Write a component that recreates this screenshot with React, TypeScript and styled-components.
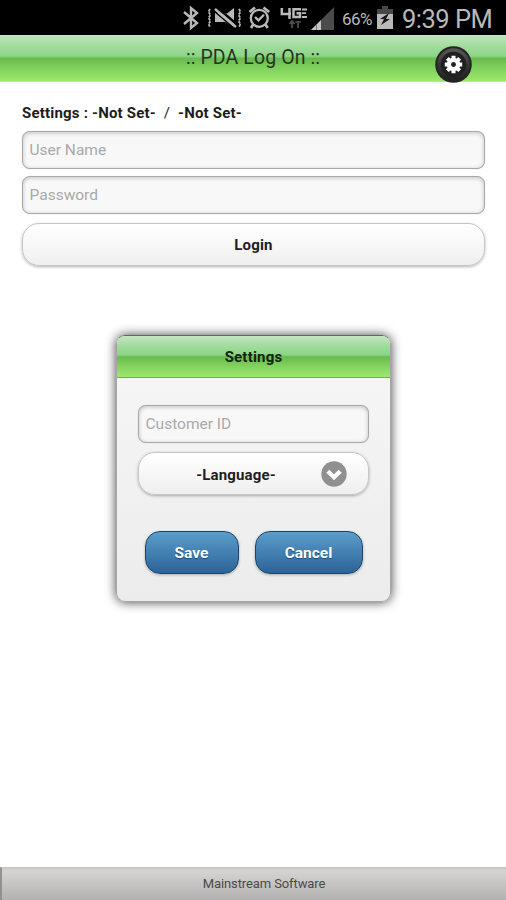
import React from "react";
import styled, { createGlobalStyle, css } from "styled-components";

const GlobalStyle = createGlobalStyle`
  *, *::before, *::after { box-sizing: border-box; }
  html, body { margin: 0; padding: 0; background: #fff; overflow: hidden; }
  body, input, button { font-family: Roboto, "Liberation Sans", sans-serif; }
`;

const greenGloss = css`
  background: linear-gradient(
    to bottom,
    #c3e6bf 0%,
    #a5dca0 22%,
    #8bd487 46%,
    #69bb4d 51%,
    #83d25f 74%,
    #9de86c 100%
  );
`;

const Screen = styled.div`
  position: relative;
  width: 506px;
  height: 900px;
  display: flex;
  flex-direction: column;
  background: #fff;
  overflow: hidden;
`;

const StatusBar = styled.header`
  height: 35px;
  flex: none;
  display: flex;
  align-items: flex-start;
  padding-left: 182px;
  background: #000;
  color: #b9b9b9;
`;

const StatusIcon = styled.svg<{ $gap: number }>`
  display: block;
  flex: none;
  margin-right: ${(p) => p.$gap}px;
`;

const BatteryLevel = styled.span`
  width: 35px;
  padding-top: 9px;
  font-size: 17px;
  line-height: 20px;
  letter-spacing: -0.5px;
  white-space: nowrap;
`;

const Clock = styled.time`
  padding-top: 4px;
  font-size: 25.5px;
  line-height: 30px;
  letter-spacing: -0.5px;
  white-space: nowrap;
`;

const TitleBar = styled.div`
  height: 47px;
  flex: none;
  display: grid;
  grid-template-columns: 72px 1fr 72px;
  border-bottom: 1px solid #b7eb9b;
  ${greenGloss}
`;

const Title = styled.h1`
  grid-column: 2;
  margin: 0;
  padding-top: 9px;
  text-align: center;
  font-size: 19.5px;
  font-weight: 400;
  line-height: 27px;
  letter-spacing: 0.1px;
  color: #263522;
`;

const GearButton = styled.button`
  width: 37px;
  height: 37px;
  margin: 11px 0 0 1px;
  padding: 0;
  border: 0;
  background: none;
  svg { display: block; }
`;

const Form = styled.main`
  flex: 1;
  display: flex;
  flex-direction: column;
  padding: 21px 21px 0 22px;
`;

const SettingsLine = styled.p`
  margin: 0 0 8px;
  font-size: 15px;
  font-weight: 700;
  line-height: 20px;
  letter-spacing: 0.2px;
  color: #1c1c1c;
  white-space: pre;
`;

const Separator = styled.span`
  font-weight: 400;
`;

const Field = styled.input<{ $gap: number }>`
  width: 100%;
  height: 38px;
  flex: none;
  margin: 0 0 ${(p) => p.$gap}px;
  padding: 0 6.5px;
  border: 1px solid #a9a9a9;
  border-radius: 8px;
  background: #f8f8f8;
  box-shadow: inset 0 1px 4px rgba(0, 0, 0, 0.22), 0 0 1px rgba(0, 0, 0, 0.25);
  font-size: 15.5px;
  letter-spacing: 0;
  outline: none;
  &::placeholder { color: #a9a9a9; opacity: 1; }
`;

const PillButton = styled.button`
  position: relative;
  width: 100%;
  height: 43px;
  flex: none;
  display: flex;
  align-items: center;
  justify-content: center;
  padding: 1px 0 0 0;
  border: 1px solid #c6c6c6;
  border-radius: 17px;
  background: linear-gradient(to bottom, #fff, #efefef);
  box-shadow: 0 1px 3px rgba(0, 0, 0, 0.3);
  font-size: 15px;
  font-weight: 700;
  letter-spacing: 0.15px;
  color: #1e1e1e;
`;

const SelectButton = styled(PillButton)`
  padding: 2px 35px 0 0;
`;

const SelectArrow = styled.svg`
  position: absolute;
  right: 21px;
  top: 8px;
`;

const Dialog = styled.section`
  position: absolute;
  left: 116px;
  top: 335px;
  width: 275px;
  height: 267px;
  display: flex;
  flex-direction: column;
  border: 1px solid #a5a5a5;
  border-top-color: #5b6d59;
  border-radius: 9px;
  background: linear-gradient(to bottom, #f7f7f7, #ececec);
  box-shadow: 0 0 11px rgba(0, 0, 0, 0.75);
  overflow: hidden;
`;

const DialogTitle = styled.h2`
  height: 42px;
  flex: none;
  margin: 0;
  border-bottom: 1px solid #79a75f;
  text-align: center;
  font-size: 15px;
  line-height: 42px;
  font-weight: 700;
  letter-spacing: 0.2px;
  color: #15240f;
  ${greenGloss}
`;

const DialogBody = styled.div`
  padding: 27px 21px 0;
`;

const Actions = styled.div`
  display: flex;
  gap: 16px;
  padding: 36px 0 0 7px;
`;

const BlueButton = styled.button<{ $width: number }>`
  width: ${(p) => p.$width}px;
  height: 43px;
  padding: 1px 1px 0 0;
  border: 1px solid #1c4566;
  border-radius: 15px;
  background: linear-gradient(to bottom, #5b9dcb, #2c6398);
  box-shadow: 0 1px 3px rgba(0, 0, 0, 0.28);
  color: #fff;
  font-size: 15.5px;
  font-weight: 700;
  text-shadow: 0 1px 1px #194b7e;
`;

const Footer = styled.footer`
  height: 33px;
  flex: none;
  padding-left: 20px;
  border-top: 1px solid #c2c1c0;
  border-left: 2px solid #929191;
  background: linear-gradient(to bottom, #d9d7d5, #b2b1b1);
  box-shadow: inset 0 2px 0 #cecdcb;
  text-align: center;
  font-size: 13px;
  line-height: 31px;
  letter-spacing: -0.1px;
  color: #4a4a4a;
`;

const Bluetooth = () => (
  <StatusIcon $gap={8} width="18" height="35" viewBox="0 0 18 35" fill="none" stroke="currentColor" strokeWidth="2.4">
    <path d="M2 12 L15 23 L9 28 V8 L15 13 L2 24" />
  </StatusIcon>
);

const VibrateMuted = () => (
  <StatusIcon $gap={6} width="34" height="35" viewBox="0 0 34 35" fill="none" stroke="currentColor">
    <path d="M2 9 l-1.5 3 2 3 -2 3 2 3 -2 3 1.5 3 M31 9 l1.5 3 -2 3 2 3 -2 3 2 3 -1.5 3" strokeWidth="1.8" strokeDasharray="2.8 0.8" />
    <path d="M7 13 H13 L19 13.5 L26 8 V27 L17 22 H7 Z" fill="currentColor" stroke="none" />
    <path d="M8.5 7 L29.5 25" stroke="#000" strokeWidth="2.6" />
    <path d="M6 11 L27 29" stroke="#000" strokeWidth="1.6" />
    <path d="M7 9 L28 27" strokeWidth="2.4" />
  </StatusIcon>
);

const Alarm = () => (
  <StatusIcon $gap={9} width="23" height="35" viewBox="0 0 23 35" fill="none" stroke="currentColor" strokeWidth="2.3">
    <circle cx="11.3" cy="18.3" r="8.5" />
    <path d="M1.5 12 L7 7.5 M15.5 7.5 L21.2 12 M5.2 24.5 L3 28 M17.5 24.5 L19.7 28" strokeWidth="2.7" />
    <path d="M7 17 L10.5 20.4 L16 14.8" />
  </StatusIcon>
);

const Network4G = () => (
  <StatusIcon $gap={3} width="28" height="35" viewBox="0 0 28 35" fill="none" stroke="currentColor" strokeWidth="2.5">
    <path d="M1.8 8 V14 H11 M9.5 8 V19 M21 9.2 H13.5 V17 H20 V13.2 H16.5" />
    <path d="M22 9.5 H27 M22 13.2 H26 M22 17 H27" strokeWidth="1.8" />
    <path d="M12 21 V28 M9.5 24 L12 21 L14.5 24 M18 21 V28 M15.5 22 H21" stroke="#505050" strokeWidth="1.7" />
  </StatusIcon>
);

const Signal = () => (
  <StatusIcon $gap={8} width="23" height="35" viewBox="0 0 23 35">
    <path d="M0 30 L23 7 V30 Z" fill="#4b4b4b" />
    <path d="M0 30 L10 20 V30 Z" fill="#c3c3c3" />
    <path d="M5.5 24.5 V30" stroke="#777" />
  </StatusIcon>
);

const Battery = () => (
  <StatusIcon $gap={9} width="16" height="35" viewBox="0 0 16 35">
    <path d="M0 9 H5 V6 H11 V9 H16 V29 H0 Z" fill="#484848" />
    <path d="M0 14 H16 V29 H0 Z" fill="#b9b9b9" />
    <path d="M12 13 L3 19 H7 L4 25 L13 19 H9 Z" fill="#151515" />
  </StatusIcon>
);

const Gear = () => (
  <svg width="37" height="37" viewBox="0 0 37 37">
    <defs>
      <linearGradient id="ring" x2="0" y2="1">
        <stop stopColor="#555" />
        <stop offset="0.5" stopColor="#363636" />
        <stop offset="1" stopColor="#222" />
      </linearGradient>
    </defs>
    <circle cx="18.5" cy="18.5" r="18.3" fill="#242424" />
    <circle cx="18.5" cy="18.5" r="14.5" fill="#202020" stroke="url(#ring)" strokeWidth="3.5" />
    <g stroke="#fff" strokeWidth="4">
      <path d="M18.5 9.8 V27.2 M9.8 18.5 H27.2 M12.35 12.35 L24.65 24.65 M24.65 12.35 L12.35 24.65" />
    </g>
    <circle cx="18.5" cy="18.5" r="4.5" fill="#202020" stroke="#fff" strokeWidth="4.5" />
    <circle cx="18.5" cy="18.5" r="2.2" fill="#202020" />
  </svg>
);

export default function App() {
  return (
    <>
      <GlobalStyle />
      <Screen>
        <StatusBar>
          <Bluetooth />
          <VibrateMuted />
          <Alarm />
          <Network4G />
          <Signal />
          <BatteryLevel>66%</BatteryLevel>
          <Battery />
          <Clock>9:39 PM</Clock>
        </StatusBar>
        <TitleBar>
          <Title>:: PDA Log On ::</Title>
          <GearButton aria-label="Open settings"><Gear /></GearButton>
        </TitleBar>
        <Form>
          <SettingsLine>
            {"Settings : -Not Set-  "}
            <Separator>/</Separator>
            {"  -Not Set-"}
          </SettingsLine>
          <Field $gap={7} placeholder="User Name" />
          <Field $gap={9} type="password" placeholder="Password" />
          <PillButton>Login</PillButton>
        </Form>
        <Footer>Mainstream Software</Footer>
        <Dialog role="dialog" aria-label="Settings">
          <DialogTitle>Settings</DialogTitle>
          <DialogBody>
            <Field $gap={9} placeholder="Customer ID" />
            <SelectButton>
              -Language-
              <SelectArrow width="26" height="26" viewBox="0 0 26 26">
                <circle cx="13" cy="13" r="12.7" fill="#909090" />
                <path d="M6.8 10.3 L13 16.3 L19.2 10.3" fill="none" stroke="#fff" strokeWidth="4.2" />
              </SelectArrow>
            </SelectButton>
            <Actions>
              <BlueButton $width={94}>Save</BlueButton>
              <BlueButton $width={108}>Cancel</BlueButton>
            </Actions>
          </DialogBody>
        </Dialog>
      </Screen>
    </>
  );
}
